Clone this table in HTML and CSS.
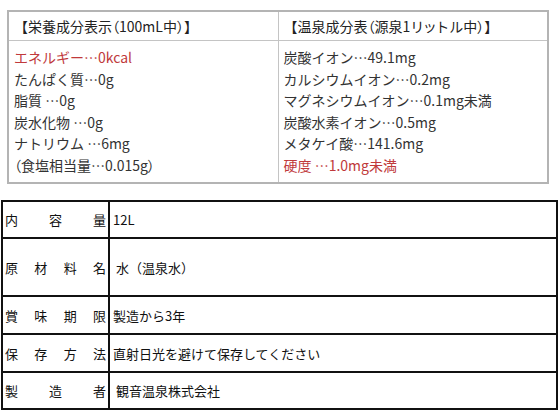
FILE: index.html
```html
<!DOCTYPE html>
<html lang="ja">
<head>
<meta charset="utf-8">
<link rel="stylesheet" href="styles.css">
</head>
<body>
<div class="page">
  <table class="comp">
    <tr>
      <th>【栄養成分表示<span class="palt">（</span>100mL中<span class="palt">）</span>】</th>
      <th>【温泉成分表<span class="palt">（</span>源泉1リ<span class="palt">ッ</span>トル中<span class="palt">）</span>】</th>
    </tr>
    <tr>
      <td>
        <div class="red">エネルギー…0kcal</div>
        <div>たんぱく質…0g</div>
        <div>脂質 …0g</div>
        <div>炭水化物 …0g</div>
        <div>ナトリウム …6mg</div>
        <div class="palt">（食塩相当量…0.015g）</div>
      </td>
      <td>
        <div>炭酸イオン…49.1mg</div>
        <div>カルシウムイオン…0.2mg</div>
        <div>マグネシウムイオン…0.1mg未満</div>
        <div>炭酸水素イオン…0.5mg</div>
        <div>メタケイ酸…141.6mg</div>
        <div class="red">硬度 …1.0mg未満</div>
      </td>
    </tr>
  </table>

  <div class="spec">
    <div class="row r1">
      <div class="label"><span>内</span><span>容</span><span>量</span></div>
      <div class="val">12L</div>
    </div>
    <div class="row r2">
      <div class="label"><span>原</span><span>材</span><span>料</span><span>名</span></div>
      <div class="val">&nbsp;水（温泉水）</div>
    </div>
    <div class="row r3">
      <div class="label"><span>賞</span><span>味</span><span>期</span><span>限</span></div>
      <div class="val">製造から3年</div>
    </div>
    <div class="row r4">
      <div class="label"><span>保</span><span>存</span><span>方</span><span>法</span></div>
      <div class="val">直射日光を避けて保存してください</div>
    </div>
    <div class="row r5">
      <div class="label"><span>製</span><span>造</span><span>者</span></div>
      <div class="val">&nbsp;観音温泉株式会社</div>
    </div>
  </div>
</div>
</body>
</html>
```

FILE: styles.css
```css
html, body {
  margin: 0;
  padding: 0;
  background: #fff;
}
.page {
  width: 560px;
  height: 420px;
  padding-top: 10px;
  box-sizing: border-box;
  font-family: "Noto Sans CJK JP", "Noto Sans", sans-serif;
  color: #333;
}
.comp {
  margin-left: 7px;
  width: 542px;
  border-collapse: collapse;
  border: 2px solid #b4b4b4;
  font-size: 14px;
  table-layout: fixed;
}
.comp th, .comp td {
  border: 1px solid #c4c4c4;
  text-align: left;
  vertical-align: top;
  padding: 0 5px;
}
.comp th {
  font-weight: normal;
  height: 28px;
  line-height: 28px;
  color: #222;
  white-space: nowrap;
}
.comp td {
  padding-top: 6px;
  padding-bottom: 6px;
  line-height: 21.5px;
}
.comp td div {
  white-space: nowrap;
}
.palt {
  font-feature-settings: "palt";
}
.red {
  color: #c0393b;
}
.spec {
  margin-top: 16px;
  margin-left: 1px;
  width: 557px;
  border: 2px solid #111;
  box-sizing: border-box;
  font-size: 13px;
  color: #111;
}
.row {
  display: grid;
  grid-template-columns: 107px 1fr;
  border-top: 2px solid #111;
}
.row:first-child {
  border-top: none;
}
.r1 { height: 35px; }
.r2 { height: 56px; }
.r3 { height: 36px; }
.r4 { height: 36px; }
.r5 { height: 35px; }
.label {
  border-right: 2px solid #111;
  display: flex;
  align-items: center;
  justify-content: space-between;
  padding: 0 2px 0 2px;
}
.val {
  display: flex;
  align-items: center;
  padding-left: 3px;
  white-space: nowrap;
}
```
